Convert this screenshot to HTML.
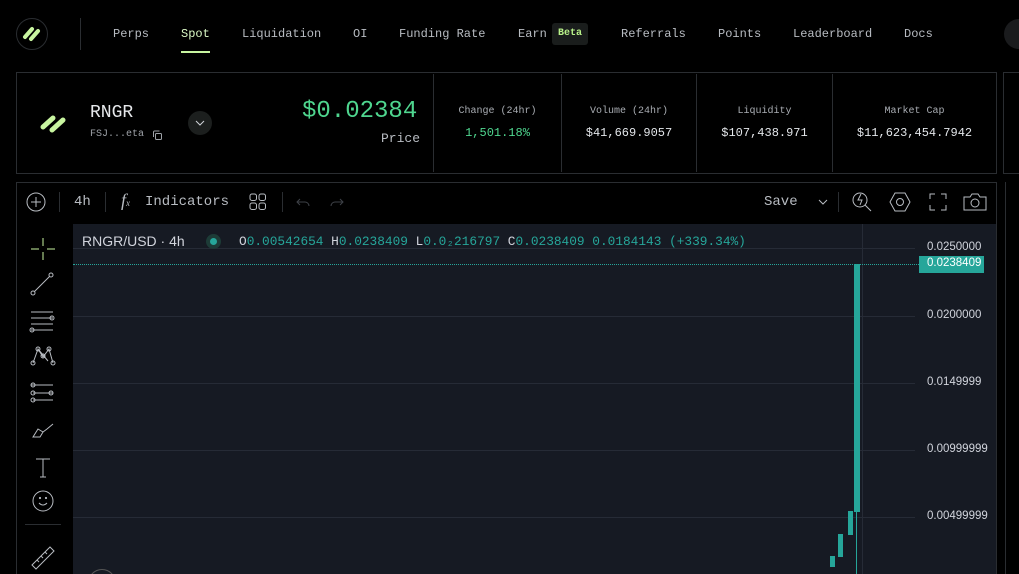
<!DOCTYPE html>
<html><head><style>
*{margin:0;padding:0;box-sizing:border-box}
html,body{width:1019px;height:574px;overflow:hidden}
body{background:#000;position:relative;font-family:"Liberation Mono",monospace;color:#cfd3d8}
.a{position:absolute}
.nav{font-size:12px;color:#b8bcc2;top:27px}
.stat{top:106px;text-align:center;font-size:10px;color:#a9adb3}
.stat b{display:block;font-weight:normal;font-size:12px;color:#e3e6ea;margin-top:9px}
.vs{width:1px;background:#2a2d31}
.ax{font-family:"Liberation Sans",sans-serif;font-size:11.5px;color:#d1d4dc;left:927px}
.g{height:1px;background:#262b36;left:73px;width:842px}
</style></head><body>
<div class="a" style="left:16px;top:18px;width:32px;height:32px;border-radius:50%;border:1px solid #2a2d31"></div>
<svg class="a" style="left:22px;top:25px" width="20" height="18" viewBox="0 0 20 18"><g stroke="#c8f5a0" stroke-width="4" stroke-linecap="round"><line x1="3" y1="12" x2="10" y2="4"/><line x1="9" y1="14" x2="16" y2="6"/></g></svg>
<div class="a vs" style="left:80px;top:18px;height:32px"></div>
<div class="a nav" style="left:113px">Perps</div>
<div class="a nav" style="left:181px;color:#d9f7c4">Spot</div>
<div class="a" style="left:181px;top:51px;width:29px;height:2px;background:#c8f5a0"></div>
<div class="a nav" style="left:242px">Liquidation</div>
<div class="a nav" style="left:353px">OI</div>
<div class="a nav" style="left:399px">Funding Rate</div>
<div class="a nav" style="left:518px">Earn</div>
<div class="a" style="left:552px;top:23px;width:36px;height:22px;background:#1a1d1c;border-radius:3px;color:#b9f28a;font-size:10px;font-weight:bold;text-align:center;line-height:22px">Beta</div>
<div class="a nav" style="left:621px">Referrals</div>
<div class="a nav" style="left:718px">Points</div>
<div class="a nav" style="left:793px">Leaderboard</div>
<div class="a nav" style="left:904px">Docs</div>
<div class="a" style="left:1004px;top:19px;width:30px;height:30px;border-radius:50%;background:#1a1b1d"></div>

<div class="a" style="left:16px;top:72px;width:981px;height:102px;border:1px solid #2a2d31"></div>
<div class="a" style="left:1003px;top:72px;width:30px;height:102px;border:1px solid #2a2d31"></div>
<svg class="a" style="left:39px;top:112px" width="30" height="22" viewBox="0 0 30 22"><g stroke="#c8f5a0" stroke-width="5" stroke-linecap="round"><line x1="4" y1="15" x2="14" y2="6"/><line x1="13" y1="18" x2="24" y2="8"/></g></svg>
<div class="a" style="left:90px;top:103px;font-size:18px;color:#e6e8eb">RNGR</div>
<div class="a" style="left:90px;top:129px;font-size:10px;color:#9ea2a8">FSJ...eta</div>
<svg class="a" style="left:152px;top:130px" width="11" height="11" viewBox="0 0 11 11" fill="none" stroke="#9ea2a8"><rect x="3.5" y="3.5" width="6" height="6" rx="1"/><path d="M1.5 7V2a1 1 0 0 1 1-1h5"/></svg>
<div class="a" style="left:188px;top:111px;width:24px;height:24px;border-radius:50%;background:#1c1f1e"></div>
<svg class="a" style="left:195px;top:119px" width="10" height="8"><path d="M1 2l4 4 4-4" stroke="#cfd3d8" fill="none"/></svg>
<div class="a" style="left:302px;top:98px;font-size:24px;color:#4fd68f">$0.02384</div>
<div class="a" style="left:381px;top:131px;font-size:13px;color:#b8bcc2">Price</div>
<div class="a vs" style="left:433px;top:74px;height:98px"></div>
<div class="a vs" style="left:561px;top:74px;height:98px"></div>
<div class="a vs" style="left:696px;top:74px;height:98px"></div>
<div class="a vs" style="left:832px;top:74px;height:98px"></div>
<div class="a stat" style="left:434px;width:127px">Change (24hr)<b style="color:#4fd68f">1,501.18%</b></div>
<div class="a stat" style="left:562px;width:134px">Volume (24hr)<b>$41,669.9057</b></div>
<div class="a stat" style="left:697px;width:135px">Liquidity<b>$107,438.971</b></div>
<div class="a stat" style="left:833px;width:163px">Market Cap<b>$11,623,454.7942</b></div>

<div class="a" style="left:16px;top:182px;width:981px;height:400px;border:1px solid #2a2d31"></div>
<div class="a" style="left:1005px;top:182px;width:1px;height:400px;background:#2a2d31"></div>
<svg class="a" style="left:26px;top:192px" width="20" height="20" fill="none" stroke="#b8bcc2"><circle cx="10" cy="10" r="9"/><path d="M10 5v10M5 10h10"/></svg>
<div class="a vs" style="left:59px;top:192px;height:20px"></div>
<div class="a" style="left:74px;top:194px;font-size:14px;color:#b8bcc2">4h</div>
<div class="a vs" style="left:105px;top:192px;height:20px"></div>
<div class="a" style="left:121px;top:190px;font-size:18px;color:#b8bcc2;font-family:'Liberation Serif',serif;font-style:italic">f<span style="font-size:9px">x</span></div>
<div class="a" style="left:145px;top:194px;font-size:14px;color:#b8bcc2">Indicators</div>
<svg class="a" style="left:249px;top:193px" width="18" height="18" fill="none" stroke="#b8bcc2"><rect x="1" y="1" width="6.5" height="6.5" rx="2"/><rect x="10" y="1" width="6.5" height="6.5" rx="2"/><rect x="1" y="10" width="6.5" height="6.5" rx="2"/><rect x="10" y="10" width="6.5" height="6.5" rx="2"/></svg>
<div class="a vs" style="left:282px;top:192px;height:20px"></div>
<svg class="a" style="left:296px;top:195px" width="60" height="14" fill="none" stroke="#3e4248"><path d="M4 4l-3 3 3 3M1 7h8a4 4 0 0 1 4 4"/><path d="M44 4l3 3-3 3M47 7h-8a4 4 0 0 0-4 4"/></svg>
<div class="a" style="left:764px;top:194px;font-size:14px;color:#b8bcc2">Save</div>
<svg class="a" style="left:818px;top:198px" width="10" height="8"><path d="M1 2l4 4 4-4" stroke="#b8bcc2" fill="none"/></svg>
<div class="a vs" style="left:838px;top:192px;height:20px"></div>
<svg class="a" style="left:850px;top:190px" width="24" height="24" fill="none" stroke="#b8bcc2"><circle cx="10" cy="10" r="7"/><path d="M15 15l6 6M11 4l-3 6h4l-2 5"/></svg>
<svg class="a" style="left:889px;top:191px" width="22" height="22" fill="none" stroke="#b8bcc2"><path d="M6 2h10l5 9-5 9H6L1 11z"/><circle cx="11" cy="11" r="3.5"/></svg>
<svg class="a" style="left:929px;top:193px" width="18" height="18" fill="none" stroke="#b8bcc2"><path d="M1 6V1h5M12 1h5v5M17 12v5h-5M6 17H1v-5"/></svg>
<svg class="a" style="left:963px;top:192px" width="24" height="20" fill="none" stroke="#b8bcc2"><path d="M1 5h6l2-3h6l2 3h6v13H1z"/><circle cx="12" cy="11" r="4"/></svg>
<div class="a" style="left:17px;top:223px;width:56px;height:351px;background:#000"></div>
<svg class="a" style="left:28px;top:234px" width="30" height="340" fill="none" stroke="#b8bcc2" stroke-width="1">
<g stroke="#c8f5a0"><path d="M15 4v8M15 18v8M3 15h8M19 15h8"/></g>
<circle cx="5" cy="59" r="2"/><circle cx="23" cy="41" r="2"/><path d="M6.5 57.5l15-15"/>
<path d="M3 78h22M3 84h22M3 90h22M3 96h22"/><circle cx="24" cy="84" r="2"/><circle cx="4" cy="96" r="2"/>
<path d="M5 129l5-14 5 8 6-8 4 14M10 115l10 12"/><circle cx="5" cy="129" r="2"/><circle cx="10" cy="115" r="2"/><circle cx="21" cy="115" r="2"/><circle cx="25" cy="129" r="2"/><circle cx="15" cy="122" r="2"/>
<path d="M3 151h22M5 159h20M5 166h20"/><circle cx="5" cy="151" r="2"/><circle cx="5" cy="159" r="2"/><circle cx="23" cy="159" r="2"/><circle cx="5" cy="166" r="2"/>
<path d="M5 203l5-8 5 3-3 5zM15 198l4-3 6-5"/>
<path d="M8 225h14M15 225v18M12 243h6"/>
<circle cx="15" cy="267" r="10"/><path d="M11 269q4 4 8 0"/><circle cx="12" cy="264" r=".6"/><circle cx="18" cy="264" r=".6"/>
<path d="M4 331l18-18 4 4-18 18zM9 326l2 2M13 322l2 2M17 318l2 2"/>
</svg>
<div class="a" style="left:25px;top:524px;width:36px;height:1px;background:#2a2d31"></div>
<div class="a" style="left:73px;top:224px;width:923px;height:350px;background:#161a23"></div>
<div class="a g" style="top:248px"></div>
<div class="a g" style="top:316px"></div>
<div class="a g" style="top:383px"></div>
<div class="a g" style="top:450px"></div>
<div class="a g" style="top:517px"></div>
<div class="a" style="left:862px;top:224px;width:1px;height:350px;background:#262b36"></div>
<div class="a" style="left:73px;top:264px;width:846px;border-top:1px dotted #26a69a"></div>
<div class="a" style="left:82px;top:233px;font-size:14px;color:#d1d4dc;font-family:'Liberation Sans',sans-serif">RNGR/USD · 4h</div>
<div class="a" style="left:206px;top:234px;width:15px;height:15px;border-radius:50%;background:#1d3b37"></div>
<div class="a" style="left:210px;top:238px;width:7px;height:7px;border-radius:50%;background:#26a69a"></div>
<div class="a" style="left:239px;top:234px;font-size:12.8px;color:#d1d4dc">O<span style="color:#26a69a">0.00542654</span> H<span style="color:#26a69a">0.0238409</span> L<span style="color:#26a69a">0.0₂216797</span> C<span style="color:#26a69a">0.0238409 0.0184143 (+339.34%)</span></div>
<div class="a ax" style="top:241px">0.0250000</div>
<div class="a" style="left:919px;top:256px;width:65px;height:17px;background:#26a69a"></div>
<div class="a ax" style="top:257px;color:#fff">0.0238409</div>
<div class="a ax" style="top:309px">0.0200000</div>
<div class="a ax" style="top:376px">0.0149999</div>
<div class="a ax" style="top:443px">0.00999999</div>
<div class="a ax" style="top:510px">0.00499999</div>
<div class="a" style="left:856px;top:264px;width:1px;height:310px;background:#26a69a"></div>
<div class="a" style="left:854px;top:264px;width:6px;height:248px;background:#26a69a"></div>
<div class="a" style="left:848px;top:511px;width:5px;height:24px;background:#26a69a"></div>
<div class="a" style="left:838px;top:534px;width:5px;height:23px;background:#26a69a"></div>
<div class="a" style="left:830px;top:556px;width:5px;height:11px;background:#26a69a"></div>
<div class="a" style="left:88px;top:569px;width:28px;height:28px;border-radius:50%;border:1px solid #555"></div>
</body></html>
